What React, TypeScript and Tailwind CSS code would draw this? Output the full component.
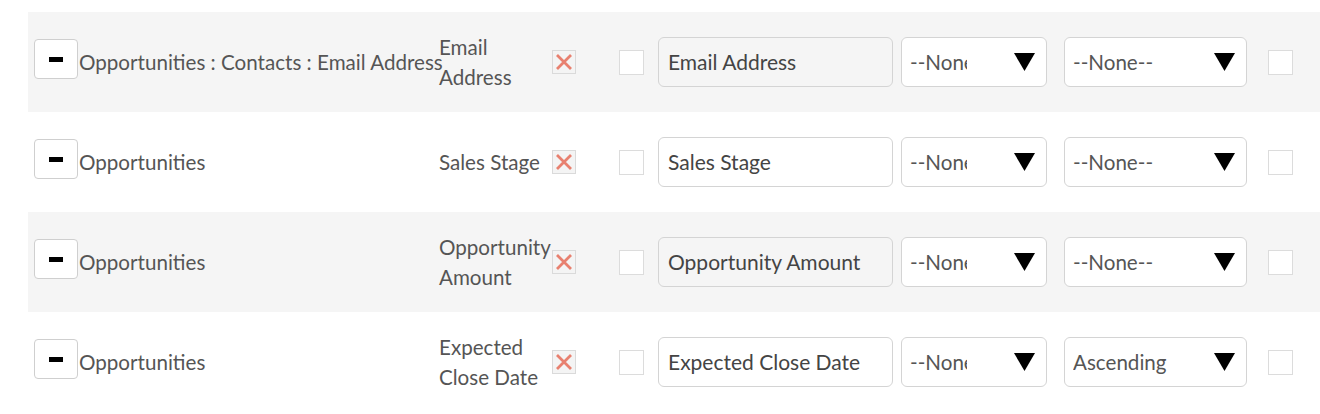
import React from 'react';

type Row = {
  module: string;
  field: string[];
  value: string;
  group: string;
  order: string;
};

const rows: Row[] = [
  { module: 'Opportunities : Contacts : Email Address', field: ['Email', 'Address'], value: 'Email Address', group: '--None--', order: '--None--' },
  { module: 'Opportunities', field: ['Sales Stage'], value: 'Sales Stage', group: '--None--', order: '--None--' },
  { module: 'Opportunities', field: ['Opportunity', 'Amount'], value: 'Opportunity Amount', group: '--None--', order: '--None--' },
  { module: 'Opportunities', field: ['Expected', 'Close Date'], value: 'Expected Close Date', group: '--None--', order: 'Ascending' },
];

function Caret() {
  return (
    <svg width="21" height="18" viewBox="0 0 21 18" className="shrink-0">
      <polygon points="0,0 21,0 10.5,18" fill="#000" />
    </svg>
  );
}

function SelectBox({ text, width, textWidth }: { text: string; width: string; textWidth: string }) {
  return (
    <div className={`${width} h-[50px] rounded-[6px] border border-[#d4d4d4] bg-white flex items-center pl-[8px] pr-[11px]`}>
      <span className={`${textWidth} overflow-hidden whitespace-nowrap`}>{text}</span>
      <span className="flex-1" />
      <Caret />
    </div>
  );
}

export default function App() {
  return (
    <div className="w-[1320px] h-[414px] bg-white pt-[12px] pl-[28px] text-[20.6px] text-[#555] font-['Lato',sans-serif]">
      {rows.map((r, i) => (
        <div
          key={i}
          className={`h-[100px] flex items-center pl-[6px] ${i % 2 === 0 ? 'bg-[#f5f5f5]' : 'bg-white'}`}
        >
          <div className="w-[44px] h-[40px] mb-[6px] rounded-[4px] border border-[#cfcfcf] bg-white flex items-center justify-center shrink-0">
            <span className="block w-[14px] h-[5px] bg-black" />
          </div>
          <div className="w-[361px] pl-[1px] whitespace-nowrap shrink-0">{r.module}</div>
          <div className="w-[113px] leading-[30px] shrink-0">
            {r.field.map((f, j) => (
              <div key={j} className="whitespace-nowrap">{f}</div>
            ))}
          </div>
          <div className="w-[24px] h-[24px] border border-[#dadada] bg-[#f4f4f4] flex items-center justify-center shrink-0">
            <svg width="18" height="18" viewBox="0 0 18 18">
              <path d="M2 2 L16 16 M16 2 L2 16" stroke="#e8806f" strokeWidth="2.8" />
            </svg>
          </div>
          <div className="w-[25px] h-[25px] border border-[#dcdcdc] bg-white shrink-0 ml-[43px]" />
          <div className="w-[235px] h-[50px] rounded-[6px] border border-[#d4d4d4] flex items-center px-[9px] text-[21px] text-[#444] shrink-0 ml-[14px]">
            {r.value}
          </div>
          <div className="ml-[8px] shrink-0">
            <SelectBox text={r.group} width="w-[146px]" textWidth="w-[57px]" />
          </div>
          <div className="ml-[17px] shrink-0">
            <SelectBox text={r.order} width="w-[183px]" textWidth="w-[100px]" />
          </div>
          <div className="w-[25px] h-[25px] border border-[#dcdcdc] bg-white shrink-0 ml-[21px]" />
        </div>
      ))}
    </div>
  );
}
